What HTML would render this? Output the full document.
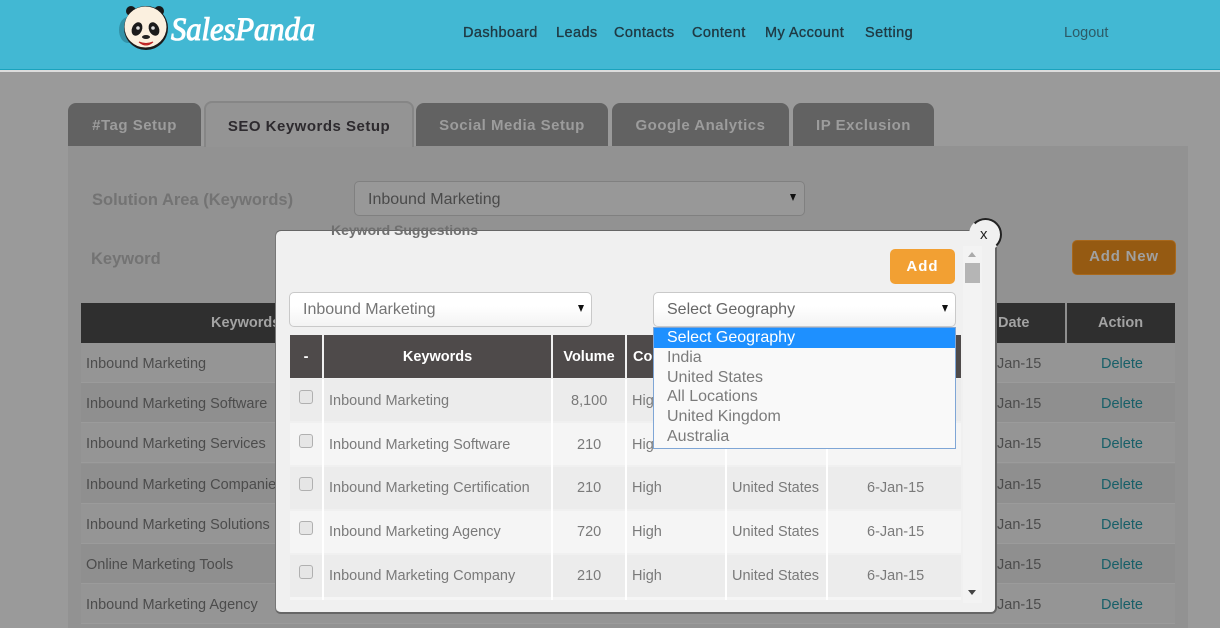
<!DOCTYPE html>
<html><head><meta charset="utf-8"><style>
*{box-sizing:border-box}
html,body{margin:0;padding:0}
body{width:1220px;height:628px;position:relative;overflow:hidden;background:#9a9a9a;font-family:"Liberation Sans",sans-serif;font-size:14px;color:#4f4f4f}
.a{position:absolute;white-space:nowrap}
.nav{top:24px;font-size:14.5px;line-height:18px;color:#1f3a44;letter-spacing:.42px;-webkit-text-stroke:.35px #1f3a44}
.tab{position:absolute;top:103px;height:43px;background:#626262;border-radius:8px 8px 0 0;color:#9c9c9c;font-weight:bold;font-size:15px;line-height:46px;text-align:center;letter-spacing:.5px}
.bgt{position:absolute;left:81px;width:1094px;height:40px;border-bottom:1px solid #9b9b9b}
.bgt span{position:absolute;top:0;line-height:42px;font-size:14.5px;color:#4c4c4c}
.bgt span.d{color:#175f68}
.sel{position:absolute;border-radius:5px;font-size:16px}
.arrow{position:absolute;width:0;height:0;border-left:3.5px solid transparent;border-right:3.5px solid transparent;border-top:7px solid #111}
.th{position:absolute;top:335px;height:43px;background:#4e4a4a;color:#fff;font-weight:bold;font-size:14.5px;line-height:44px;text-align:center}
.row{position:absolute;left:290px;width:671px;height:42px}
.cell{position:absolute;height:42px;line-height:45px;font-size:14.5px;color:#7a7a7a}
.cb{position:absolute;left:299px;width:14px;height:14px;border:1px solid #b0b0b0;border-radius:3px;background:#e6e6e6}
.opt{position:absolute;left:14px;font-size:16px;line-height:20px;color:#7b7b7b}
</style></head><body>

<div class="a" style="left:0;top:0;width:1220px;height:69px;background:#42b8d3"></div>
<div class="a" style="left:0;top:69px;width:1220px;height:1px;background:#1aa3bd"></div>
<div class="a" style="left:0;top:70px;width:1220px;height:2px;background:#dcdcdc"></div>

<svg class="a" style="left:116px;top:2px" width="60" height="50" viewBox="0 0 60 50">
<ellipse cx="12" cy="28" rx="9" ry="13" fill="#2c8296" opacity=".7"/>
<circle cx="15" cy="9" r="5" fill="#17191a"/><circle cx="43" cy="9" r="5" fill="#17191a"/>
<circle cx="30" cy="26" r="22" fill="#1b1b1b"/>
<ellipse cx="29.500" cy="25" rx="21" ry="20.500" fill="#fbf0df"/>
<ellipse cx="21" cy="27" rx="5" ry="7" fill="#1b1b1b" transform="rotate(25 21 27)"/>
<ellipse cx="38" cy="27" rx="5" ry="7" fill="#1b1b1b" transform="rotate(-25 38 27)"/>
<circle cx="22" cy="26" r="1.800" fill="#ddd"/><circle cx="37" cy="26" r="1.800" fill="#ddd"/>
<ellipse cx="30" cy="35" rx="4" ry="2" fill="#222"/>
<path d="M23 40 Q30 46 37 40 Q30 43 23 40Z" fill="#d83a3a" stroke="#b22" stroke-width="1"/>
</svg>
<svg class="a" style="left:168px;top:4px" width="155" height="48" viewBox="0 0 155 48">
<text x="3" y="36" font-family="Liberation Serif, serif" font-style="italic" font-size="33" fill="#fff" stroke="#fff" stroke-width="1.100" textLength="144" lengthAdjust="spacingAndGlyphs">SalesPanda</text>
</svg>

<div class="a nav" style="left:463px">Dashboard</div>
<div class="a nav" style="left:556px">Leads</div>
<div class="a nav" style="left:614px">Contacts</div>
<div class="a nav" style="left:692px">Content</div>
<div class="a nav" style="left:765px">My Account</div>
<div class="a nav" style="left:865px">Setting</div>
<div class="a" style="left:1064px;top:24px;font-size:14.500px;line-height:18px;color:#2d5a66">Logout</div>

<div class="a" style="left:68px;top:146px;width:1120px;height:482px;background:#929292"></div>
<div class="tab" style="left:68px;width:133px">#Tag Setup</div>
<div class="tab" style="left:204px;top:101px;width:210px;height:46px;background:#949494;border:2px solid #868686;border-bottom:0;color:#2d2a2e;line-height:47px">SEO Keywords Setup</div>
<div class="tab" style="left:416px;width:192px">Social Media Setup</div>
<div class="tab" style="left:612px;width:177px">Google Analytics</div>
<div class="tab" style="left:793px;width:141px">IP Exclusion</div>

<div class="a" style="left:92px;top:190px;font-size:16.500px;font-weight:bold;line-height:20px;color:#737373">Solution Area (Keywords)</div>
<div class="a" style="left:91px;top:249px;font-size:16.500px;font-weight:bold;line-height:20px;color:#737373">Keyword</div>
<div class="sel" style="left:354px;top:181px;width:451px;height:35px;background:#989898;border:1px solid #808080"><span class="a" style="left:13px;top:8px;line-height:20px;color:#4a4a4a">Inbound Marketing</span></div>
<div class="arrow" style="left:790px;top:194px"></div>
<div class="a" style="left:1072px;top:240px;width:104px;height:35px;background:#955a12;border:1px solid #a8681c;border-radius:5px;color:#a0a0a0;font-weight:bold;font-size:15px;line-height:32px;text-align:center;letter-spacing:.8px">Add New</div>

<div class="a" style="left:81px;top:303px;width:1094px;height:40px;background:#2f2f2f"></div>
<div class="a" style="left:1065px;top:303px;width:2px;height:40px;background:#8f8f8f"></div>
<div class="a" style="left:211px;top:314px;font-weight:bold;font-size:14.500px;line-height:18px;color:#a3a3a3">Keywords</div>
<div class="a" style="left:998px;top:314px;font-weight:bold;font-size:14.500px;line-height:18px;color:#a3a3a3">Date</div>
<div class="a" style="left:1098px;top:314px;font-weight:bold;font-size:14.500px;line-height:18px;color:#a3a3a3">Action</div>

<div class="bgt" style="top:343px;background:#959595"><span style="left:5px">Inbound Marketing</span><span style="left:916px">Jan-15</span><span class="d" style="left:1020px">Delete</span></div>
<div class="bgt" style="top:383px;background:#8f8f8f"><span style="left:5px">Inbound Marketing Software</span><span style="left:916px">Jan-15</span><span class="d" style="left:1020px">Delete</span></div>
<div class="bgt" style="top:423px;background:#959595"><span style="left:5px">Inbound Marketing Services</span><span style="left:916px">Jan-15</span><span class="d" style="left:1020px">Delete</span></div>
<div class="bgt" style="top:464px;background:#8f8f8f"><span style="left:5px">Inbound Marketing Companies</span><span style="left:916px">Jan-15</span><span class="d" style="left:1020px">Delete</span></div>
<div class="bgt" style="top:504px;background:#959595"><span style="left:5px">Inbound Marketing Solutions</span><span style="left:916px">Jan-15</span><span class="d" style="left:1020px">Delete</span></div>
<div class="bgt" style="top:544px;background:#8f8f8f"><span style="left:5px">Online Marketing Tools</span><span style="left:916px">Jan-15</span><span class="d" style="left:1020px">Delete</span></div>
<div class="bgt" style="top:584px;background:#959595"><span style="left:5px">Inbound Marketing Agency</span><span style="left:916px">Jan-15</span><span class="d" style="left:1020px">Delete</span></div>

<!-- Modal -->
<div class="a" style="left:275px;top:230px;width:722px;height:384px;background:#f0f0f0;border:1px solid #666;border-right-width:2px;border-bottom-width:2px;border-left-color:#777;border-radius:6px"></div>
<div class="a" style="left:331px;top:222px;font-size:14px;font-weight:bold;line-height:16px;color:#6f6f6f">Keyword Suggestions</div>

<div class="a" style="left:969px;top:218px;width:33px;height:33px;border-radius:50%;background:#f0f0f0;border:2px solid #222;border-left-color:#f0f0f0;border-bottom-color:#f0f0f0"></div>
<div class="a" style="left:980px;top:226px;font-size:15px;line-height:18px;color:#222">x</div>

<div class="a" style="left:890px;top:249px;width:65px;height:35px;background:#f2a033;border-radius:5px;color:#fff;font-weight:bold;font-size:15px;line-height:35px;text-align:center;letter-spacing:1px">Add</div>

<div class="sel" style="left:289px;top:292px;width:303px;height:35px;background:linear-gradient(#fff 40%,#f3f3f3);border:1px solid #c9c9c9"><span class="a" style="left:13px;top:7px;line-height:20px;color:#757575">Inbound Marketing</span></div>
<div class="arrow" style="left:578px;top:305px"></div>
<div class="sel" style="left:653px;top:292px;width:303px;height:35px;background:linear-gradient(#fff 40%,#f3f3f3);border:1px solid #c9c9c9"><span class="a" style="left:13px;top:7px;line-height:20px;color:#666">Select Geography</span></div>
<div class="arrow" style="left:942px;top:305px"></div>

<div class="th" style="left:290px;width:32px">-</div>
<div class="th" style="left:324px;width:227px">Keywords</div>
<div class="th" style="left:553px;width:72px">Volume</div>
<div class="th" style="left:627px;width:334px;text-align:left;padding-left:6px">Competition</div>

<div class="row" style="top:379px;background:#ececec"></div>
<div class="row" style="top:423px;background:#f5f5f5"></div>
<div class="row" style="top:467px;background:#ececec"></div>
<div class="row" style="top:511px;background:#f5f5f5"></div>
<div class="row" style="top:555px;background:#ececec"></div>
<div class="a" style="left:290px;top:597px;width:671px;height:3px;background:#f5f5f5"></div>
<div class="a" style="left:322px;top:379px;width:2px;height:221px;background:#fff"></div>
<div class="a" style="left:551px;top:379px;width:2px;height:221px;background:#fff"></div>
<div class="a" style="left:625px;top:379px;width:2px;height:221px;background:#fff"></div>
<div class="a" style="left:725px;top:379px;width:2px;height:221px;background:#fff"></div>
<div class="a" style="left:826px;top:379px;width:2px;height:221px;background:#fff"></div>

<div class="cb" style="top:390px"></div>
<div class="cb" style="top:434px"></div>
<div class="cb" style="top:477px"></div>
<div class="cb" style="top:521px"></div>
<div class="cb" style="top:565px"></div>

<div class="a cell" style="left:329px;top:379px">Inbound Marketing</div>
<div class="a cell" style="left:329px;top:423px">Inbound Marketing Software</div>
<div class="a cell" style="left:329px;top:466px">Inbound Marketing Certification</div>
<div class="a cell" style="left:329px;top:510px">Inbound Marketing Agency</div>
<div class="a cell" style="left:329px;top:554px">Inbound Marketing Company</div>

<div class="a cell" style="left:571px;top:379px">8,100</div>
<div class="a cell" style="left:577px;top:423px">210</div>
<div class="a cell" style="left:577px;top:466px">210</div>
<div class="a cell" style="left:577px;top:510px">720</div>
<div class="a cell" style="left:577px;top:554px">210</div>

<div class="a cell" style="left:632px;top:379px">High</div>
<div class="a cell" style="left:632px;top:423px">High</div>
<div class="a cell" style="left:632px;top:466px">High</div>
<div class="a cell" style="left:632px;top:510px">High</div>
<div class="a cell" style="left:632px;top:554px">High</div>

<div class="a cell" style="left:732px;top:466px">United States</div>
<div class="a cell" style="left:732px;top:510px">United States</div>
<div class="a cell" style="left:732px;top:554px">United States</div>

<div class="a cell" style="left:867px;top:466px">6-Jan-15</div>
<div class="a cell" style="left:867px;top:510px">6-Jan-15</div>
<div class="a cell" style="left:867px;top:554px">6-Jan-15</div>

<!-- dropdown -->
<div class="a" style="left:653px;top:327px;width:303px;height:122px;background:#f9f9f9;border:1px solid #7fa6d6">
<div class="a" style="left:0;top:0;width:301px;height:20px;background:#1e90ff"></div>
<div class="opt" style="top:0;left:13px;color:#fff">Select Geography</div>
<div class="opt" style="top:20px;left:13px">India</div>
<div class="opt" style="top:40px;left:13px">United States</div>
<div class="opt" style="top:59px;left:13px">All Locations</div>
<div class="opt" style="top:79px;left:13px">United Kingdom</div>
<div class="opt" style="top:99px;left:13px">Australia</div>
</div>

<!-- scrollbar -->
<div class="a" style="left:963px;top:246px;width:19px;height:357px;background:#f3f3f3"></div>
<div class="a" style="left:968px;top:252px;width:0;height:0;border-left:4.500px solid transparent;border-right:4.500px solid transparent;border-bottom:5px solid #aaa"></div>
<div class="a" style="left:965px;top:263px;width:15px;height:20px;background:#b5b5b5"></div>
<div class="a" style="left:968px;top:590px;width:0;height:0;border-left:4.500px solid transparent;border-right:4.500px solid transparent;border-top:5px solid #444"></div>

</body></html>
